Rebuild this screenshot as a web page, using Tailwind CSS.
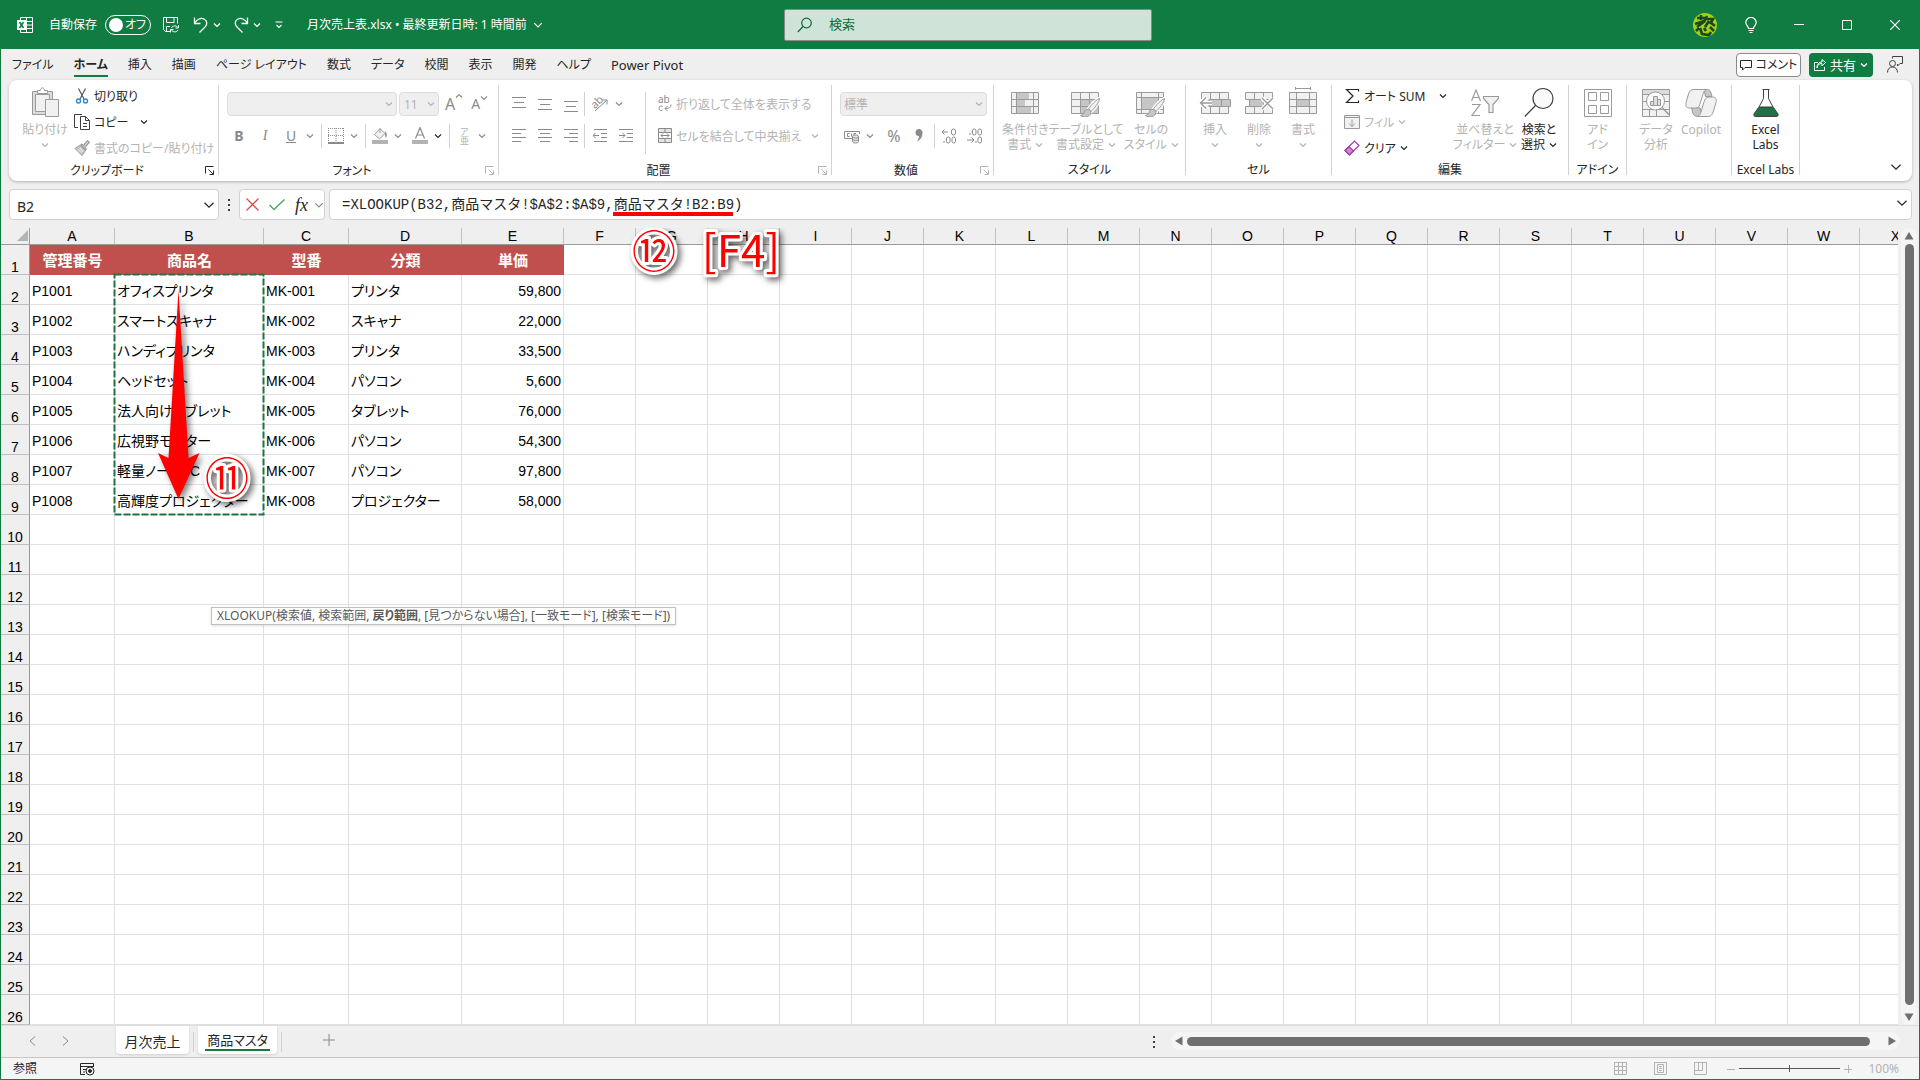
<!DOCTYPE html>
<html lang="ja">
<head>
  <meta charset="UTF-8" />
  <meta name="viewport" content="width=device-width, initial-scale=1.0" />
  <title>月次売上表.xlsx - Excel</title>
  <script src="https://cdn.jsdelivr.net/npm/@tailwindcss/browser@4"></script>
</head>
<body class="font-['Noto_Sans','Noto_Sans_CJK_JP',sans-serif] text-xs text-[#262626] [font-feature-settings:'palt']">

  <!-- shared symbols -->
  <svg class="hidden">
    <symbol id="chev" viewBox="0 0 8 8"><path d="M1 2.500 4 5.500 7 2.500" fill="none" stroke="currentColor" stroke-width="1.200" vector-effect="non-scaling-stroke" /></symbol>
    <symbol id="launch" viewBox="0 0 9 9"><path d="M.5 7.500V.5h8M3.500 3.500l4.500 4.500M8.500 4.500v4h-4" fill="none" stroke="currentColor" /></symbol>
    <symbol id="brush" viewBox="0 0 22 22">
      <path d="M20.500 1.500c-3 1-9 7-11 10.500l2.500 2.500C15.500 11.500 20.500 5 20.500 1.500z" fill="#f1f1f1" stroke="#fff" stroke-width="3.500" />
      <path d="M20.500 1.500c-3 1-9 7-11 10.500l2.500 2.500C15.500 11.500 20.500 5 20.500 1.500z" fill="#f1f1f1" stroke="#9a9a9a" />
      <path d="M9.500 12.500c-2.500-.5-4 1-4.500 3-.4 1.800-1.500 2.500-3.500 3 2.500 2 8.500 1.800 10-1.500.8-1.800 0-4-2-4.500z" fill="#c6c6c6" stroke="#9a9a9a" />
    </symbol>
  </svg>

  <div class="flex h-screen flex-col overflow-hidden border-x border-b border-[#107c41] bg-[#efefef]">

    <!-- title bar -->
    <header class="grid h-[49px] shrink-0 grid-cols-[1fr_368px_1fr] items-center bg-[#107c41] pl-4 text-white">
      <div class="flex items-center whitespace-nowrap">
        <svg class="h-4 w-4" viewBox="0 0 16 16"><path d="M3.500.5h12v15h-12zM3.500 4.500h12M3.500 8h12M3.500 11.500h12M9.500.5v15" fill="none" stroke="#fff" /><path d="M0 3h9v10H0z" fill="#fff" /><path d="M2.500 5l4 6M6.500 5l-4 6" stroke="#107c41" stroke-width="1.600" /></svg>
        <label for="autosave" class="ml-4">自動保存</label>
        <button id="autosave" class="ml-2 flex h-5 w-[46px] items-center justify-between rounded-full border border-white pr-1 pl-[3px]">
          <span class="h-3.5 w-3.5 rounded-full bg-white"></span><span>オフ</span>
        </button>
        <button class="ml-3" aria-label="保存"><svg class="h-4 w-4" viewBox="0 0 16 16" fill="none" stroke="#fff"><path d="M7 14.500H2.500L.5 12.500V.5h14v6M3.500.5v5h7.500v-5M3.500 14V9.500H7" /><path d="M15.500 8v3h-3M7.500 15.500v-3h3M8.500 11c1-2.500 4.500-3 6.500-.5M15 13c-1.500 2.500-5 2.500-6.500 0" /></svg></button>
        <button class="ml-3.5" aria-label="元に戻す"><svg class="h-4 w-4" viewBox="0 0 16 16" fill="none" stroke="#fff" stroke-width="1.300"><path d="M1.500.5v6h6M1.500 6.500C4 2 8 .5 11 2c3.500 1.800 3.500 5.500 1 8l-5.500 5.500" /></svg></button>
        <svg class="ml-1 h-2 w-2"><use href="#chev" /></svg>
        <button class="ml-3" aria-label="やり直し"><svg class="h-4 w-4" viewBox="0 0 16 16" fill="none" stroke="#fff" stroke-width="1.300"><path d="M14.500.5v6h-6M14.500 6.500C12 2 8 .5 5 2c-3.500 1.800-3.500 5.500-1 8l5.500 5.500" /></svg></button>
        <svg class="ml-1 h-2 w-2"><use href="#chev" /></svg>
        <svg class="ml-3.5 h-2 w-2" viewBox="0 0 8 8"><path d="M.5 1h7M1.500 4l2.500 2.500L6.500 4" fill="none" stroke="#fff" stroke-width="1.200" /></svg>
        <h1 class="ml-6">月次売上表.xlsx • 最終更新日時: 1 時間前</h1>
        <svg class="ml-1.5 h-2.5 w-2.5"><use href="#chev" /></svg>
      </div>
      <label class="flex h-8 items-center gap-4 rounded-[2px] border border-[#8a8a8a] bg-[#cfe3d8] px-3 text-[#0e6b38]">
        <svg class="h-4 w-4 shrink-0" viewBox="0 0 16 16" fill="none" stroke="currentColor" stroke-width="1.200"><circle cx="9.500" cy="6" r="4.800" /><path d="M6 9.500.8 15" /></svg>
        <input type="text" placeholder="検索" aria-label="検索" class="w-full bg-transparent text-[13px] outline-none placeholder:text-[#0e6b38]" />
      </label>
      <div class="flex items-center justify-end pr-[19px]">
        <svg class="h-6 w-6" viewBox="0 0 24 24"><circle cx="12" cy="12" r="12" fill="#a4cf1d" /><g fill="none" stroke="#17491c" stroke-width="2.600"><path d="M4 5h8M8 2v5M2 11l9-3M4 14l8-6M14 3l-3 6M13 6h7l-3 5M16 8l-4 6M17 9l5 4M3 18l3-3M7 15l2 6 7 1 2-3M11 15l2 3M17 14l4 4" /></g></svg>
        <svg class="ml-7 h-4 w-3" viewBox="0 0 12 16" fill="none" stroke="#fff" stroke-width="1.200"><path d="M3.500 11.500C3.500 9 .8 8.500.8 5.500a5.200 5 0 0 1 10.400 0c0 3-2.700 3.500-2.700 6zM3.500 13.500h5M4.500 15.500h3" /></svg>
        <button class="ml-[37px]" aria-label="最小化"><svg class="h-2.5 w-2.5" viewBox="0 0 10 10"><path d="M0 4.500h10" stroke="#fff" /></svg></button>
        <button class="ml-[38px]" aria-label="最大化"><svg class="h-2.5 w-2.5" viewBox="0 0 10 10"><path d="M.5.5h9v9h-9z" fill="none" stroke="#fff" /></svg></button>
        <button class="ml-[38px]" aria-label="閉じる"><svg class="h-2.5 w-2.5" viewBox="0 0 10 10"><path d="M0 0l10 10M10 0 0 10" stroke="#fff" stroke-width="1.200" /></svg></button>
      </div>
    </header>

    <!-- tabs -->
    <nav class="flex h-[31px] shrink-0 items-center justify-between pr-4 pl-[11px] leading-5">
      <div class="flex items-center gap-5 whitespace-nowrap">
        <a href="#">ファイル</a>
        <a href="#" class="relative font-bold">ホーム<span class="absolute inset-x-0 -bottom-[2px] h-0.5 bg-[#107c41]"></span></a>
        <a href="#">挿入</a>
        <a href="#">描画</a>
        <a href="#">ページ レイアウト</a>
        <a href="#">数式</a>
        <a href="#">データ</a>
        <a href="#">校閲</a>
        <a href="#">表示</a>
        <a href="#">開発</a>
        <a href="#">ヘルプ</a>
        <a href="#" class="text-[13px]">Power Pivot</a>
      </div>
      <div class="flex items-center gap-2">
        <button class="flex h-6 w-[65px] items-center justify-center gap-1 rounded border border-[#8a8a8a] bg-white whitespace-nowrap">
          <svg class="h-3 w-3 shrink-0" viewBox="0 0 12 12"><path d="M.5 1.500h11v7H5l-2.500 2.500v-2.500h-2z" fill="none" stroke="#262626" /></svg>コメント
        </button>
        <button class="flex h-6 w-16 items-center justify-center gap-1 rounded bg-[#107c41] text-[13px] whitespace-nowrap text-white">
          <svg class="h-3 w-3" viewBox="0 0 12 12" fill="none" stroke="#fff"><path d="M4 3.500H.5v8h10V8M3 9c.3-3 2-4.500 5-4.500V7l3.500-3.500L8 .5V3C5 3 3 5 3 9z" /></svg>共有
          <svg class="h-2 w-2"><use href="#chev" /></svg>
        </button>
        <svg class="ml-1.5 h-[17px] w-4" viewBox="0 0 16 17" fill="none" stroke="#404040"><circle cx="5.500" cy="7.500" r="3" /><path d="M.5 16.500c0-3.500 2-5.500 5-5.500s5 2 5 5.500M5.500 2.500v-2h10v7h-2.500L10.500 10V8" /></svg>
      </div>
    </nav>

    <!-- ribbon -->
    <section class="mr-[7px] ml-2 flex h-[101px] shrink-0 rounded-lg bg-white pt-[3px] leading-[15px] whitespace-nowrap text-[#b3b3b3] shadow-[0_1px_3px_rgba(0,0,0,0.25)]">

      <div class="flex w-[209px] flex-col">
        <div class="flex h-[78px]">
          <button class="flex w-[56px] shrink-0 flex-col items-center pt-1 pl-4">
            <svg class="h-[30px] w-7 shrink-0" viewBox="0 0 28 30" fill="#f1f1f1" stroke="#9a9a9a"><path d="M1.500 4.500h20v23h-20z" fill="#dcdcdc" /><path d="M4.500 7.500h14v17h-14z" /><path d="M6.500 6.500v-3h3c0-3.500 4-3.500 4 0h3v3z" fill="#fff" /><path d="M14 12h14v18H14z" fill="#fff" stroke="none" /><path d="M14.500 12.500h13v17h-13z" /></svg>
            <span class="mt-[5px]">貼り付け</span>
            <svg class="mt-1 h-2 w-2"><use href="#chev" /></svg>
          </button>
          <div class="flex flex-col text-[#262626]">
            <button class="flex h-[26px] items-center gap-1 pl-[9px]">
              <svg class="h-4 w-4" viewBox="0 0 16 16" fill="none"><path d="M4.500.5 10 11M11.500.5 6 11" stroke="#555" stroke-width="1.200" /><circle cx="4.500" cy="13" r="2" stroke="#2b88d0" stroke-width="1.400" /><circle cx="11.500" cy="13" r="2" stroke="#2b88d0" stroke-width="1.400" /></svg>切り取り
            </button>
            <button class="flex h-[26px] items-center gap-1 pl-[9px]">
              <svg class="h-4 w-4" viewBox="0 0 16 16" fill="none" stroke="#404040"><path d="M4 13.500H.5V.5H8" /><path d="M6.500 2.500h5l4 4v9h-9zM11.500 2.500v4h4M9 9.500h4M9 12.500h4" fill="#fff" /></svg>コピー
              <svg class="ml-2 h-2 w-2"><use href="#chev" /></svg>
            </button>
            <button class="flex h-[26px] items-center gap-1 pl-[9px] text-[#b3b3b3]">
              <svg class="h-4 w-4" viewBox="0 0 16 16"><path d="M1 8.500 8 4l4.500 5L8 15.500z" fill="#c6c6c6" stroke="#9a9a9a" /><path d="M9.500 5.500 13.500.8l1.700 1.500-4 4.500M7 5l4 5" stroke="#9a9a9a" stroke-width="1.300" fill="#f1f1f1" /><path d="M4 9.500l3 3M6 8l3 4" stroke="#fff" stroke-width=".8" /></svg>書式のコピー/貼り付け
            </button>
          </div>
        </div>
        <div class="flex h-[18px] items-center pr-1 text-[#262626]"><span class="flex-1 text-center">クリップボード</span><svg class="h-[9px] w-[9px]"><use href="#launch" /></svg></div>
      </div>
      <div class="mt-0.5 mb-1.5 w-px bg-[#d1d1d1]"></div>

      <div class="flex w-[279px] flex-col">
        <div class="flex h-[78px] flex-col gap-2 pt-[9px] pl-2">
          <div class="flex items-center">
            <div class="relative">
              <select disabled aria-label="フォント" class="block h-6 w-[170px] appearance-none rounded border border-[#dcdcdc] bg-[#efefef]"><option></option></select>
              <svg class="absolute top-2 right-1 h-2 w-2"><use href="#chev" /></svg>
            </div>
            <div class="relative ml-0.5">
              <select disabled aria-label="フォント サイズ" class="block h-6 w-10 appearance-none rounded border border-[#dcdcdc] bg-[#efefef] px-1 text-[#b3b3b3] opacity-100"><option>11</option></select>
              <svg class="absolute top-2 right-1 h-2 w-2"><use href="#chev" /></svg>
            </div>
            <button class="ml-1.5 flex text-base text-[#8a8a8a]">A<svg class="h-2 w-2 rotate-180"><use href="#chev" /></svg></button>
            <button class="ml-2 flex text-sm text-[#8a8a8a]">A<svg class="h-2 w-2"><use href="#chev" /></svg></button>
          </div>
          <div class="flex h-6 items-center text-sm text-[#8a8a8a]">
            <button class="ml-1.5 w-3 font-bold">B</button>
            <button class="ml-3.5 w-3 font-['Liberation_Serif',serif] italic">I</button>
            <button class="ml-3.5 w-3 underline">U</button>
            <svg class="ml-[9px] h-2 w-2"><use href="#chev" /></svg>
            <div class="ml-[7px] h-6 w-px bg-[#d1d1d1]"></div>
            <svg class="ml-1.5 h-4 w-4" viewBox="0 0 16 16"><path d="M.5 0v15M15.500 0v15M0 .5h16M8 0v15M0 7.500h16" stroke="#8a8a8a" stroke-dasharray="1 1" /><path d="M0 15h16" stroke="#8a8a8a" stroke-width="2" /></svg>
            <svg class="ml-1.5 h-2 w-2"><use href="#chev" /></svg>
            <div class="ml-[7px] h-6 w-px bg-[#d1d1d1]"></div>
            <svg class="ml-1.5 h-[18px] w-4" viewBox="0 0 16 18"><path d="M2.500 7.500 8 1.500l5 5L7.500 12zM8 1.500V6" fill="#f1f1f1" stroke="#9a9a9a" /><path d="M13 4c2.500 2 2 5 1 7-.8-1-1.500-3-1-7z" fill="#9a9a9a" /><path d="M0 13h16v4H0z" fill="#b3b3b3" /></svg>
            <svg class="ml-1.5 h-2 w-2"><use href="#chev" /></svg>
            <svg class="ml-2.5 h-[18px] w-4" viewBox="0 0 16 18"><path d="M3.500 11.500 8 .5l4.500 11M5 8h6" fill="none" stroke="#8a8a8a" stroke-width="1.200" /><path d="M0 13h16v4H0z" fill="#b3b3b3" /></svg>
            <svg class="ml-1.5 h-2 w-2 text-[#262626]"><use href="#chev" /></svg>
            <div class="ml-[7px] h-6 w-px bg-[#d1d1d1]"></div>
            <span class="ml-2.5 flex flex-col text-[9px] leading-[9px] text-[#b3b3b3]"><span>ア</span><span>亜</span></span>
            <svg class="ml-[9px] h-2 w-2"><use href="#chev" /></svg>
          </div>
        </div>
        <div class="flex h-[18px] items-center pr-1"><span class="flex-1 text-center text-[#262626]">フォント</span><svg class="h-[9px] w-[9px]"><use href="#launch" /></svg></div>
      </div>
      <div class="mt-0.5 mb-1.5 w-px bg-[#d1d1d1]"></div>

      <div class="flex w-[332px] flex-col">
        <div class="flex h-[78px] pt-[9px] pl-[13px]">
          <div class="flex flex-col gap-2">
            <div class="flex h-6 items-center gap-3 text-[#8a8a8a]">
              <svg class="h-4 w-3.5" viewBox="0 0 14 16"><path d="M0 1.500h14M2 6.500h10M0 11.500h14" stroke="currentColor" /></svg>
              <svg class="h-4 w-3.5" viewBox="0 0 14 16"><path d="M0 3.500h14M2 8.500h10M0 13.500h14" stroke="currentColor" /></svg>
              <svg class="h-4 w-3.5" viewBox="0 0 14 16"><path d="M0 5.500h14M2 10.500h10M0 15.500h14" stroke="currentColor" /></svg>
              <div class="-ml-1.5 h-6 w-px bg-[#d1d1d1]"></div>
              <svg class="-ml-1.5 h-[18px] w-[18px] overflow-visible" viewBox="0 0 18 18"><text x="0" y="11" font-size="11" fill="currentColor" transform="rotate(-45 6 8)">ab</text><path d="M4 16 16 5M11.500 5H16v4.500" fill="none" stroke="currentColor" /></svg>
              <svg class="-ml-1.5 h-2 w-2"><use href="#chev" /></svg>
            </div>
            <div class="flex h-6 items-center gap-3 text-[#8a8a8a]">
              <svg class="h-4 w-3.5" viewBox="0 0 14 16"><path d="M0 1.500h14M0 5.500h9M0 9.500h14M0 13.500h9" stroke="currentColor" /></svg>
              <svg class="h-4 w-3.5" viewBox="0 0 14 16"><path d="M0 1.500h14M2 5.500h10M0 9.500h14M2 13.500h10" stroke="currentColor" /></svg>
              <svg class="h-4 w-3.5" viewBox="0 0 14 16"><path d="M0 1.500h14M5 5.500h9M0 9.500h14M5 13.500h9" stroke="currentColor" /></svg>
              <div class="-ml-1.5 h-6 w-px bg-[#d1d1d1]"></div>
              <svg class="-ml-1 h-4 w-3.5" viewBox="0 0 14 16" fill="none" stroke="currentColor"><path d="M1 1.500h13M8 5.500h6M8 9.500h6M1 13.500h13M0 7.500h6M2.500 5 0 7.500 2.500 10" /></svg>
              <svg class="h-4 w-3.5" viewBox="0 0 14 16" fill="none" stroke="currentColor"><path d="M0 1.500h14M8 5.500h6M8 9.500h6M0 13.500h14M0 7.500h6M3.500 5 6 7.500 3.500 10" /></svg>
            </div>
          </div>
          <div class="ml-3 h-[62px] w-px bg-[#d1d1d1]"></div>
          <div class="ml-3 flex flex-col gap-2">
            <button class="flex h-6 items-center gap-1">
              <svg class="h-4 w-3.5 overflow-visible" viewBox="0 0 14 16" fill="none" stroke="#8a8a8a"><text x="0" y="7" font-size="10" fill="#8a8a8a" stroke="none">ab</text><path d="M4.500 10.500c-1.500-1-3.500-.5-3.500 1.700s2 2.800 3.500 1.800M13 8.500c0 3-1.500 4-6 4M9.500 10 7 12.500 9.500 15" /></svg>折り返して全体を表示する
            </button>
            <button class="flex h-6 items-center gap-1">
              <svg class="h-4 w-3.5" viewBox="0 0 14 16" fill="none" stroke="#8a8a8a"><path d="M.5.5h13v14H.5z" fill="#e4e4e4" /><path d="M.5 4.500h13v6H.5z" fill="#fff" /><path d="M7 .5v4M7 10.500v4M3 7.500h8M5 5.500l-2 2 2 2M9 5.500l2 2-2 2" /></svg>セルを結合して中央揃え
              <svg class="ml-1.5 h-2 w-2"><use href="#chev" /></svg>
            </button>
          </div>
        </div>
        <div class="flex h-[18px] items-center pr-1"><span class="flex-1 text-center text-[#262626]">配置</span><svg class="h-[9px] w-[9px]"><use href="#launch" /></svg></div>
      </div>
      <div class="mt-0.5 mb-1.5 w-px bg-[#d1d1d1]"></div>

      <div class="flex w-[161px] flex-col">
        <div class="flex h-[78px] flex-col gap-2 pt-[9px] pl-2">
          <div class="relative w-[147px]">
            <select disabled aria-label="表示形式" class="block h-6 w-full appearance-none rounded border border-[#dcdcdc] bg-[#efefef] px-[3px] text-[#b3b3b3] opacity-100"><option>標準</option></select>
            <svg class="absolute top-2 right-1 h-2 w-2"><use href="#chev" /></svg>
          </div>
          <div class="flex h-6 items-center text-[#8a8a8a]">
            <svg class="ml-1 h-4 w-4" viewBox="0 0 16 16" fill="none" stroke="currentColor"><path d="M9 10.500H.5v-7h15V6M5.500 5.500h-2v3h2M7.500 5.500v3M10 8V5.500h2" /><path d="M8.500 8.500v5c0 2 6 2 6 0v-5c0-2-6-2-6 0s6 2 6 0M8.500 11c0 2 6 2 6 0" fill="#e4e4e4" /></svg>
            <svg class="ml-1.5 h-2 w-2"><use href="#chev" /></svg>
            <button class="ml-3 w-4 text-base">%</button>
            <svg class="ml-3 h-4 w-2.5" viewBox="0 0 10 16"><path d="M5 1a3.500 3.500 0 0 1 3.500 3.800C8.500 9 6.500 12 2.500 14c2-2.500 2.600-4 2.500-6A3.500 3.500 0 0 1 5 1z" fill="#8a8a8a" /></svg>
            <div class="ml-2.5 h-6 w-px bg-[#d1d1d1]"></div>
            <svg class="ml-1.5 h-4 w-4" viewBox="0 0 16 16" fill="none" stroke="currentColor"><path d="M1 4h6M3.500 1.500 1 4l2.500 2.500M3 13v2" /><rect x="10.500" y="1" width="4" height="6" rx="2" /><rect x="5.500" y="9" width="3.500" height="6" rx="1.700" /><rect x="11" y="9" width="3.500" height="6" rx="1.700" /></svg>
            <svg class="ml-2.5 h-4 w-4" viewBox="0 0 16 16" fill="none" stroke="currentColor"><path d="M0 12h7M4.500 9.500 7 12l-2.500 2.500M3 5v2M9 13v2" /><rect x="5.500" y="1" width="3.500" height="6" rx="1.700" /><rect x="11" y="1" width="3.500" height="6" rx="1.700" /><rect x="11" y="9" width="3.500" height="6" rx="1.700" /></svg>
          </div>
        </div>
        <div class="flex h-[18px] items-center pr-1"><span class="flex-1 text-center text-[#262626]">数値</span><svg class="h-[9px] w-[9px]"><use href="#launch" /></svg></div>
      </div>
      <div class="mt-0.5 mb-1.5 w-px bg-[#d1d1d1]"></div>

      <div class="flex w-[191px] flex-col">
        <div class="flex h-[78px] justify-between pt-1 pr-[10px] pl-2">
          <button class="flex flex-col items-center">
            <svg class="mb-[5px] h-[30px] w-7" viewBox="0 0 28 30" fill="none" stroke="#9a9a9a"><path d="M.5 5.500h27v21H.5z" fill="#f1f1f1" /><path d="M6 6h12v6H6zM6 13h8v6H6zM6 20h14v6H6z" fill="#c6c6c6" stroke="none" /><path d="M.5 12.500h27M.5 19.500h27M5.500 5.500v21M22.500 5.500v21" /></svg>
            <span>条件付き</span><span class="flex items-center gap-1">書式 <svg class="h-2 w-2"><use href="#chev" /></svg></span>
          </button>
          <button class="flex flex-col items-center">
            <svg class="mb-[5px] h-[30px] w-[30px]" viewBox="0 0 30 30" fill="none" stroke="#9a9a9a"><path d="M.5 5.500h27v21H.5z" fill="#f1f1f1" /><path d="M10 13h17v13H10z" fill="#c6c6c6" stroke="none" /><path d="M.5 12.500h27M.5 19.500h27M9.500 5.500v21M18.500 5.500v21" /><use href="#brush" x="8" y="10" width="22" height="22" /></svg>
            <span>テーブルとして</span><span class="flex items-center gap-1">書式設定 <svg class="h-2 w-2"><use href="#chev" /></svg></span>
          </button>
          <button class="flex flex-col items-center">
            <svg class="mb-[5px] h-[30px] w-[30px]" viewBox="0 0 30 30" fill="none" stroke="#9a9a9a"><path d="M.5 5.500h27v21H.5z" fill="#f1f1f1" /><path d="M5.500 10.500h17v12h-17z" fill="#c6c6c6" /><path d="M.5 10.500h27M.5 22.500h27M5.500 5.500v21M22.500 5.500v21" /><use href="#brush" x="8" y="10" width="22" height="22" /></svg>
            <span>セルの</span><span class="flex items-center gap-1">スタイル <svg class="h-2 w-2"><use href="#chev" /></svg></span>
          </button>
        </div>
        <div class="h-[18px] text-center text-[#262626] leading-[18px]">スタイル</div>
      </div>
      <div class="mt-0.5 mb-1.5 w-px bg-[#d1d1d1]"></div>

      <div class="flex w-[145px] flex-col">
        <div class="flex h-[78px] pt-1 pl-[7px]">
          <button class="flex w-11 flex-col items-center">
            <svg class="mb-[5px] h-[30px] w-8" viewBox="0 0 32 30" fill="none" stroke="#9a9a9a"><path d="M2.500 5.500h27v21h-27z" fill="#f1f1f1" /><path d="M11.500 5.500v21M20.500 5.500v21" /><path d="M10 12.500h21.500v7H10z" fill="#c6c6c6" /><path d="M22.500 12.500v7" /><path d="M13 16H1.500M7 10.500 1.500 16 7 21.500" stroke="#fff" stroke-width="4" /><path d="M13 16H1.500M7 10.500 1.500 16 7 21.500" stroke-width="1.300" /></svg>
            <span>挿入</span><svg class="mt-1 h-2 w-2"><use href="#chev" /></svg>
          </button>
          <button class="flex w-11 flex-col items-center">
            <svg class="mb-[5px] h-[30px] w-8" viewBox="0 0 32 30" fill="none" stroke="#9a9a9a"><path d="M2.500 5.500h27v7h-27zM2.500 19.500h27v7h-27z" fill="#f1f1f1" /><path d="M11.500 5.500v7M20.500 5.500v7M11.500 19.500v7M20.500 19.500v7" /><path d="M6.500 12.500h14v7h-14z" fill="#c6c6c6" /><path d="m19 11 11 11M30 11 19 22" stroke="#fff" stroke-width="4" /><path d="m19 11 11 11M30 11 19 22" stroke-width="1.300" /></svg>
            <span>削除</span><svg class="mt-1 h-2 w-2"><use href="#chev" /></svg>
          </button>
          <button class="flex w-11 flex-col items-center">
            <svg class="mb-[5px] h-[30px] w-8" viewBox="0 0 32 30" fill="none" stroke="#9a9a9a"><path d="M2.500 5.500h27v21h-27z" fill="#f1f1f1" /><path d="M10 13h13v6H10z" fill="#c6c6c6" stroke="none" /><path d="M2.500 12.500h27M2.500 19.500h27M9.500 5.500v21M22.500 5.500v21M8.500 1.500h15M8.500 0v3M23.500 0v3" /></svg>
            <span>書式</span><svg class="mt-1 h-2 w-2"><use href="#chev" /></svg>
          </button>
        </div>
        <div class="h-[18px] text-center text-[#262626] leading-[18px]">セル</div>
      </div>
      <div class="mt-0.5 mb-1.5 w-px bg-[#d1d1d1]"></div>

      <div class="flex w-[236px] flex-col">
        <div class="flex h-[78px] pl-3">
          <div class="flex w-[112px] shrink-0 flex-col text-[#262626]">
            <button class="flex h-[26px] items-center gap-1">
              <svg class="h-4 w-4" viewBox="0 0 16 16"><path d="M14.500 3.500v-2H2.500L9 8l-6.500 6.500h12v-2" fill="none" stroke="#262626" stroke-width="1.200" /></svg>オート SUM
              <svg class="ml-2.5 h-2 w-2"><use href="#chev" /></svg>
            </button>
            <button class="flex h-[26px] items-center gap-1 text-[#b3b3b3]">
              <svg class="h-4 w-4" viewBox="0 0 16 16" fill="none" stroke="#9a9a9a"><path d="M.5 1.500h15v13H.5z" fill="#f1f1f1" /><path d="M.5 3.500h15M8 5.500v7M5 9.500l3 3 3-3" /></svg>フィル
              <svg class="h-2 w-2"><use href="#chev" /></svg>
            </button>
            <button class="flex h-[26px] items-center gap-1">
              <svg class="h-4 w-4" viewBox="0 0 16 16"><path d="M1 10.500 10.500 1 15 5.500 5.500 15z" fill="#fff" stroke="#a33aa8" stroke-width="1.200" /><path d="M1 10.500 5 6.500l4.500 4.500-4 4z" fill="#cf8ad3" stroke="#a33aa8" stroke-width="1.200" /></svg>クリア
              <svg class="h-2 w-2"><use href="#chev" /></svg>
            </button>
          </div>
          <button class="flex w-[58px] shrink-0 flex-col items-center pt-1">
            <svg class="mb-[5px] h-[30px] w-7" viewBox="0 0 28 30" fill="none" stroke="#9a9a9a" stroke-width="1.200"><path d="M.5 14 5 3l4.500 11M2 10.500h6M1 17.500h8L1 28.500h8" /><path d="M12.500 9.500h15v2l-5.500 6v8h-4v-8l-5.500-6z" fill="#f1f1f1" /></svg>
            <span>並べ替えと</span><span class="flex items-center gap-1">フィルター <svg class="h-2 w-2"><use href="#chev" /></svg></span>
          </button>
          <button class="flex w-[50px] shrink-0 flex-col items-center pt-1 text-[#262626]">
            <svg class="mb-[5px] h-[30px] w-[30px]" viewBox="0 0 30 30" fill="none" stroke="#404040" stroke-width="1.200"><circle cx="19" cy="11.500" r="10" fill="#fafafa" /><path d="M11.500 18.500.8 29.500" /></svg>
            <span>検索と</span><span class="flex items-center gap-1">選択 <svg class="h-2 w-2"><use href="#chev" /></svg></span>
          </button>
        </div>
        <div class="h-[18px] text-center text-[#262626] leading-[18px]">編集</div>
      </div>
      <div class="mt-0.5 mb-1.5 w-px bg-[#d1d1d1]"></div>

      <div class="flex w-[57px] flex-col">
        <button class="flex h-[78px] flex-col items-center pt-1">
          <svg class="mb-[5px] h-[30px] w-7" viewBox="0 0 28 30" fill="none" stroke="#9a9a9a"><path d="M.5 2.500h27v27H.5z" /><path d="M4.500 5.500h8v8h-8zM16.500 5.500h8v8h-8zM4.500 18.500h8v8h-8zM16.500 18.500h8v8h-8z" /></svg>
          <span>アド</span><span>イン</span>
        </button>
        <div class="h-[18px] text-center text-[#262626] leading-[18px]">アドイン</div>
      </div>
      <div class="mt-0.5 mb-1.5 w-px bg-[#d1d1d1]"></div>

      <div class="flex w-[104px] pt-1 pl-1.5">
        <button class="flex w-[46px] flex-col items-center justify-start">
          <svg class="mb-[5px] h-[30px] w-7" viewBox="0 0 28 30" fill="none" stroke="#9a9a9a"><path d="M.5 2.500h27v27H.5z" fill="#f1f1f1" /><path d="M1 3h26v4H1z" fill="#dcdcdc" stroke="none" /><path d="M.5 7.500h27M.5 14.500h27M.5 22.500h27M7.500 22.500v7M14.500 22.500v7" /><circle cx="13.500" cy="14" r="9" fill="#fff" /><path d="M20 20.500 27.500 28" stroke-width="1.500" /><path d="M8.500 14.500h3v4h-3zM11.500 9.500h4v9h-4zM15.500 12.500h3v6h-3z" fill="#dcdcdc" /></svg>
          <span>データ</span><span>分析</span>
        </button>
        <button class="flex w-[44px] flex-col items-center justify-start">
          <svg class="mb-[5px] h-[30px] w-8 shrink-0" viewBox="0 0 32 30" stroke="#9a9a9a"><path d="M19 2.500h3.500c2 0 3 1.500 3.500 3.500l1 3.500h-6.500zM6.500 20l1 5c.6 2.500 2 4.500 5 4.500h5L15 21z" fill="#c6c6c6" /><path d="M8.500 2.500h13c-2.500 1-3 3-3.700 5.500l-3 9.500c-.8 2.500-2 3.500-4.500 3.500H4.500C1 21 .3 18.500 1 15.500l2.500-8.500C4.500 4 6 2.500 8.500 2.500z" fill="#f1f1f1" /><path d="M23.500 29.500h-11c2.500-1 3-3 3.700-5.500l3-9.500c.8-2.500 2-4.500 4.500-4.500h3.800c3.500 0 4.200 2.500 3.500 5.500L28.500 24c-1 3.500-2.500 5.500-5 5.500z" fill="#f1f1f1" /></svg>
          <span>Copilot</span>
        </button>
      </div>
      <div class="mt-0.5 mb-1.5 w-px bg-[#d1d1d1]"></div>

      <div class="flex w-[67px] flex-col text-[#262626]">
        <button class="flex h-[78px] flex-col items-center pt-1">
          <svg class="mb-[5px] h-[30px] w-[26px]" viewBox="0 0 26 30" stroke="#404040"><path d="M9.500 2.500h7M10.500 2.500v9L6 20h14l-4.500-8.500v-9" fill="#fff" /><path d="M5.500 20.500h15l4.500 6.500c.5 1.500-.3 2.500-1.500 2.500h-21C1 29.500.5 28.500 1 27z" fill="#217346" /></svg>
          <span>Excel</span><span>Labs</span>
        </button>
        <div class="h-[18px] text-center leading-[18px]">Excel Labs</div>
      </div>
      <div class="mt-0.5 mb-1.5 w-px bg-[#d1d1d1]"></div>
      <div class="flex flex-1 items-end justify-end pr-2.5 pb-2 text-[#262626]"><svg class="h-3 w-3"><use href="#chev" /></svg></div>
    </section>

    <!-- name box and formula bar -->
    <section class="mt-2 mr-[7px] ml-2 flex h-[31px] shrink-0">
      <div class="relative">
        <input type="text" value="B2" aria-label="名前ボックス" class="h-full w-[210px] rounded border border-[#d1d1d1] bg-white px-[7px] pt-[3px] text-sm" />
        <svg class="absolute top-2.5 right-1 h-3 w-3"><use href="#chev" /></svg>
      </div>
      <svg class="mx-[9px] h-full w-0.5" viewBox="0 0 2 31"><path d="M1 10v12" stroke="#404040" stroke-width="2" stroke-dasharray="2 3" /></svg>
      <div class="flex w-[86px] items-center rounded border border-[#d1d1d1] bg-white pl-[6px]">
        <svg class="h-[13px] w-[13px]" viewBox="0 0 13 13"><path d="m.5.5 12 12M12.500.5l-12 12" stroke="#e8484a" stroke-width="1.300" /></svg>
        <svg class="ml-2.5 h-3 w-4" viewBox="0 0 16 12"><path d="M.5 6 5 10.500 15.500.5" fill="none" stroke="#4ea667" stroke-width="1.500" /></svg>
        <button class="ml-2 w-[17px] font-['Liberation_Serif',serif] text-lg leading-5 italic">fx</button>
        <svg class="ml-1 h-2.5 w-2.5 text-[#8a8a8a]"><use href="#chev" /></svg>
      </div>
      <div class="relative ml-1 flex-1">
        <input type="text" value="=XLOOKUP(B32,商品マスタ!$A$2:$A$9,商品マスタ!B2:B9)" aria-label="数式バー" class="h-full w-full rounded border border-[#d1d1d1] bg-white px-3 pb-1 font-['Liberation_Mono','Noto_Sans_CJK_JP',monospace] text-sm [font-feature-settings:normal]" />
        <svg class="absolute top-2 right-1 h-3 w-3"><use href="#chev" /></svg>
        <div class="absolute top-[23px] left-[284px] h-1 w-[120px] bg-[#f00]"></div>
      </div>
    </section>

    <!-- sheet -->
    <main class="flex min-h-0 flex-1 pt-2">
      <div class="relative min-w-0 flex-1 overflow-hidden">
        <table class="w-[1931px] table-fixed border-separate border-spacing-0 font-['Liberation_Sans','Noto_Sans_CJK_JP',sans-serif] text-sm whitespace-nowrap text-black">
          <colgroup>
            <col class="w-[29px]" /><col class="w-[85px]" /><col class="w-[149px]" /><col class="w-[85px]" /><col class="w-[113px]" /><col class="w-[102px]" />
          </colgroup>
          <thead><tr id="letters" class="h-[17px]"></tr></thead>
          <tbody id="sheet"></tbody>
        </table>

        <!-- marching border round B2:B9 -->
        <svg class="absolute top-[45px] left-[112px] h-[243px] w-[152px]"><rect x="1.500" y="1.500" width="149" height="240" fill="none" stroke="#217346" stroke-width="2" stroke-dasharray="7 2" /></svg>

        <!-- argument hint -->
        <div class="absolute top-[379px] left-[210px] border border-[#c0c0c0] bg-white px-[5px] leading-4 whitespace-nowrap text-[#595959] shadow-sm">XLOOKUP(検索値, 検索範囲, <b>戻り範囲</b>, [見つからない場合], [一致モード], [検索モード])</div>

        <!-- step markers -->
        <svg class="absolute top-[60px] left-[155px] h-[216px] w-12 drop-shadow-[3px_3px_3px_rgba(0,0,0,0.5)]" viewBox="0 0 48 216"><path d="M22.500 2 32.500 170l11-5L22.500 211 2 165l10.500 5z" fill="#f00" /></svg>
        <svg class="absolute top-[223px] left-[198px] h-14 w-14 drop-shadow-[3px_3px_3px_rgba(0,0,0,0.6)]"><text x="28" y="44" text-anchor="middle" font-size="44" font-family="Noto Sans CJK JP" fill="#f00" stroke="#fff" stroke-width="6" stroke-linejoin="round" paint-order="stroke">⑪</text></svg>
        <svg class="absolute top-[-4px] left-[625px] h-14 w-14 drop-shadow-[3px_3px_3px_rgba(0,0,0,0.6)]"><text x="28" y="44" text-anchor="middle" font-size="44" font-family="Noto Sans CJK JP" fill="#f00" stroke="#fff" stroke-width="6" stroke-linejoin="round" paint-order="stroke">⑫</text></svg>
        <svg class="absolute top-[-4px] left-[688px] h-14 w-[104px] drop-shadow-[3px_3px_3px_rgba(0,0,0,0.6)]"><text x="52" y="43" text-anchor="middle" font-size="44" font-family="Noto Sans CJK JP" fill="#f00" stroke="#fff" stroke-width="6" stroke-linejoin="round" paint-order="stroke">[F4]</text></svg>
      </div>
      <div class="mr-0.5 ml-[3px] flex w-4 flex-col items-center gap-1 rounded-full bg-[#f5f5f5] py-1">
        <svg class="h-2 w-2.5" viewBox="0 0 10 8"><path d="M5 0l4.500 7.500h-9z" fill="#6f6f6f" /></svg>
        <div class="w-[9px] flex-1 rounded-full bg-[#6f6f6f]"></div>
        <svg class="mt-1 h-2 w-2.5" viewBox="0 0 10 8"><path d="M5 8 .5.500h9z" fill="#6f6f6f" /></svg>
      </div>
    </main>

    <!-- sheet tabs -->
    <section class="flex h-8 shrink-0 items-start border-t border-[#e0e0e0] text-sm">
      <svg class="mt-2.5 ml-7 h-2.5 w-2" viewBox="0 0 8 10"><path d="M6 .5 1 5l5 4.500" fill="none" stroke="#8a8a8a" /></svg>
      <svg class="mt-2.5 ml-[25px] h-2.5 w-2" viewBox="0 0 8 10"><path d="m1 .5 5 4.500-5 4.500" fill="none" stroke="#8a8a8a" /></svg>
      <button class="ml-[46px] h-7 w-[73px] rounded-b bg-white pt-1 shadow-sm">月次売上</button>
      <div class="mx-1 mt-1.5 h-5 w-px bg-[#d1d1d1]"></div>
      <button class="h-7 w-[79px] rounded-b bg-white text-[13px] shadow-sm"><span class="border-b-2 border-[#107c41] px-0.5">商品マスタ</span></button>
      <div class="mx-1 mt-1.5 h-5 w-px bg-[#d1d1d1]"></div>
      <svg class="mt-2 ml-[37px] h-3 w-3" viewBox="0 0 12 12"><path d="M6 0v12M0 6h12" stroke="#8a8a8a" /></svg>
      <svg class="mt-2.5 ml-auto h-3 w-0.5" viewBox="0 0 2 12"><path d="M1 0v12" stroke="#404040" stroke-width="2" stroke-dasharray="2 3" /></svg>
      <div class="mt-1.5 mr-[19px] ml-4 flex h-[18px] w-[38%] items-center gap-1 rounded-full bg-[#f5f5f5] px-1">
        <svg class="h-2.5 w-2" viewBox="0 0 8 10"><path d="M0 5 7.500.500v9z" fill="#6f6f6f" /></svg>
        <div class="mr-3.5 h-[9px] flex-1 rounded-full bg-[#6f6f6f]"></div>
        <svg class="h-2.5 w-2" viewBox="0 0 8 10"><path d="M8 5 .5.500v9z" fill="#6f6f6f" /></svg>
      </div>
    </section>

    <!-- status bar -->
    <footer class="flex h-[22px] shrink-0 items-center border-t border-[#c6c6c6] bg-[#f5f5f5] pr-5 pl-3 leading-4">
      <span>参照</span>
      <svg class="ml-[43px] h-3.5 w-[15px]" viewBox="0 0 15 14" fill="none" stroke="#262626"><path d="M5 12.500H.5v-11h13V5M.5 4.500h13M3 7.500h3M3 10h2" /><circle cx="10" cy="9" r="4" fill="#f5f5f5" /><circle cx="10" cy="9" r="1.500" fill="#262626" /></svg>
      <div class="ml-auto flex items-center text-[#b3b3b3]">
        <svg class="h-[13px] w-[13px]" viewBox="0 0 13 13" fill="none" stroke="currentColor"><path d="M.5.5h12v12H.5zM.5 4.500h12M.5 8.500h12M4.500.5v12M8.500.5v12" /></svg>
        <svg class="ml-[27px] h-[13px] w-[13px]" viewBox="0 0 13 13" fill="none" stroke="currentColor"><path d="M.5.5h12v12H.5zM3.500 2.500h6v8h-6zM5 4.500h3M5 6.500h3M5 8.500h3" /></svg>
        <svg class="ml-[27px] h-[13px] w-[13px]" viewBox="0 0 13 13" fill="none" stroke="currentColor"><path d="M.5.5h12v12H.5zM4.500.5v8M8.500.5v8M.5 8.500h8" /></svg>
        <svg class="ml-5 h-2 w-2" viewBox="0 0 8 8"><path d="M0 4.500h8" stroke="currentColor" /></svg>
        <svg class="ml-1 h-[7px] w-[101px]" viewBox="0 0 101 7"><path d="M0 3.500h101M50.500 0v7" stroke="#595959" /></svg>
        <svg class="ml-1 h-2 w-2" viewBox="0 0 8 8"><path d="M0 4.500h8M4.500 0v8" stroke="currentColor" /></svg>
        <span class="ml-4">100%</span>
      </div>
    </footer>
  </div>

  <script>
    const rows = [
      ['P1001', 'オフィスプリンタ', 'MK-001', 'プリンタ', '59,800'],
      ['P1002', 'スマートスキャナ', 'MK-002', 'スキャナ', '22,000'],
      ['P1003', 'ハンディプリンタ', 'MK-003', 'プリンタ', '33,500'],
      ['P1004', 'ヘッドセット', 'MK-004', 'パソコン', '5,600'],
      ['P1005', '法人向けタブレット', 'MK-005', 'タブレット', '76,000'],
      ['P1006', '広視野モニター', 'MK-006', 'パソコン', '54,300'],
      ['P1007', '軽量ノートPC', 'MK-007', 'パソコン', '97,800'],
      ['P1008', '高輝度プロジェクター', 'MK-008', 'プロジェクター', '58,000']
    ];
    const headings = ['管理番号', '商品名', '型番', '分類', '単価'];
    const cols = 'ABCDEFGHIJKLMNOPQRSTUVWX'.split('');

    // column letters
    document.getElementById('letters').innerHTML =
      `<th class="border-r border-b border-[#9a9a9a] p-0"><svg class="ml-auto h-3 w-3" viewBox="0 0 12 12"><path d="M11 0v11H0z" fill="#b3b3b3" /></svg></th>` +
      cols.map(c => `<th class="border-r border-b border-r-[#c0c0c0] border-b-[#9a9a9a] p-0 pt-px leading-[15px] font-normal">${c}</th>`).join('');

    // sheet rows
    let html = '';
    for (let r = 1; r <= 26; r++) {
      html += `<tr class="h-[30px]"><th class="border-r border-b border-r-[#9a9a9a] border-b-[#c0c0c0] p-0 align-bottom leading-[14px] font-normal">${r}</th>`;
      cols.forEach((c, i) => {
        if (r === 1 && i < 5) {
          html += `<th class="bg-[#c0504d] p-0 pt-0.5 leading-5 font-bold text-white text-[15px]">${headings[i]}</th>`;
        } else {
          const text = (rows[r - 2] || [])[i] || '';
          const align = i === 4 ? 'text-right' : 'text-left';
          html += `<td class="border-r border-b border-[#e0e0e0] bg-white px-0.5 pt-[3px] pb-0 leading-5 ${align}">${text}</td>`;
        }
      });
      html += '</tr>';
    }
    document.getElementById('sheet').innerHTML = html;
  </script>
</body>
</html>
